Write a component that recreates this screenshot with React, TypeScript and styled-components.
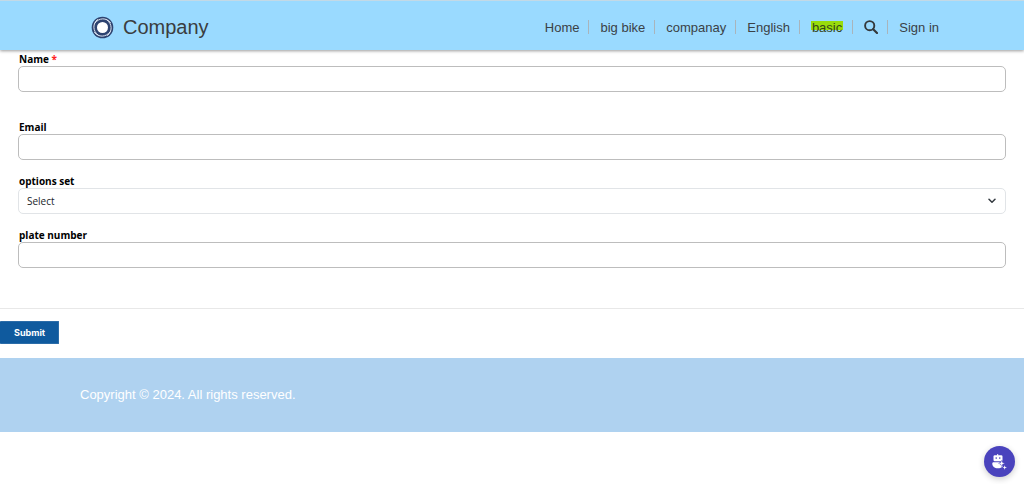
import React from "react";
import styled, { createGlobalStyle } from "styled-components";

const GlobalStyle = createGlobalStyle`
  *, *::before, *::after { box-sizing: border-box; }
  body {
    margin: 0;
    background: #fff;
    color: #000;
    font-family: "Liberation Sans", Arial, sans-serif;
    font-size: 13px;
  }
`;

const Header = styled.header`
  position: relative;
  height: 50px;
  padding: 3px 80px 0;
  display: flex;
  align-items: center;
  justify-content: space-between;
  background: #9adaff;
  border-top: 1px solid #c3d9e6;
  box-shadow: 0 1px 3px rgba(0, 0, 0, 0.4);
`;

const Brand = styled.a`
  display: flex;
  align-items: center;
  gap: 9px;
  padding-left: 11px;
  color: #3a3d40;
  font-size: 20px;
  line-height: 24px;
  text-decoration: none;
`;

const NavList = styled.ul`
  display: flex;
  align-items: center;
  margin: 0;
  padding: 0 5px 0 0;
  list-style: none;
`;

const NavItem = styled.li`
  display: flex;
  align-items: center;
  height: 24px;

  & + &::before {
    content: "";
    align-self: flex-start;
    width: 1px;
    height: 14px;
    margin: 5px 11px 0 9px;
    background: #a9b4bb;
  }
`;

const NavLink = styled.a`
  padding-top: 2px;
  color: #3a4146;
  line-height: 24px;
  text-decoration: none;
  white-space: nowrap;
`;

const Marked = styled(NavLink)`
  padding: 2px 1px 0;
  color: #34451a;
  background: linear-gradient(#98dc0c, #98dc0c) 0 7px / 100% 9px no-repeat;
`;

const IconButton = styled.button`
  display: flex;
  padding: 0;
  border: 0;
  background: none;
  color: #34383b;
  cursor: pointer;
`;

const Form = styled.form`
  margin: 0;
`;

const Fields = styled.div`
  display: flex;
  flex-direction: column;
  gap: 14px;
  padding: 2px 18px 40px;
`;

const Field = styled.div<{ $spaced?: boolean }>`
  display: flex;
  flex-direction: column;
  margin-bottom: ${(p) => (p.$spaced ? "14px" : "0")};
`;

const Label = styled.label`
  padding-left: 1px;
  font: 700 10px/14px "Open Sans", "Noto Sans", sans-serif;
`;

const Required = styled.span`
  color: #f22;
`;

const Input = styled.input`
  width: 100%;
  height: 26px;
  padding: 0 8px;
  border: 1px solid #bdbdbd;
  border-radius: 5px;
  background: #fff;
  font: 400 10px/14px "Open Sans", "Noto Sans", sans-serif;
`;

const SelectWrap = styled.div`
  display: grid;
  align-items: center;

  & > * { grid-area: 1 / 1; }
  & > svg { justify-self: end; margin-right: 10px; pointer-events: none; }
`;

const Select = styled.select`
  appearance: none;
  width: 100%;
  height: 26px;
  padding: 0 8px;
  border: 1px solid #e1e4e7;
  border-radius: 5px;
  background: #fff;
  color: #212529;
  font: 400 10px/14px "Open Sans", "Noto Sans", sans-serif;
`;

const Actions = styled.div`
  padding: 12px 0 14px;
  border-top: 1px solid #e8e8e8;
`;

const SubmitButton = styled.button`
  display: block;
  height: 23px;
  padding: 0 13px 0 14px;
  border: 1px solid #2b6ca8;
  border-left: 0;
  border-radius: 1px;
  background: #0f5a9e;
  color: #fff;
  font: 700 9px/12px Inter, sans-serif;
  cursor: pointer;
`;

const Footer = styled.footer`
  padding: 29px 80px;
  background: #afd2f0;
  color: #fff;
  line-height: 16px;
`;

const ChatButton = styled.button`
  position: fixed;
  right: 9px;
  bottom: 7px;
  width: 31px;
  height: 31px;
  display: flex;
  align-items: center;
  justify-content: center;
  padding: 0;
  border: 0;
  border-radius: 50%;
  background: #4a43bd;
  box-shadow: 0 2px 6px rgba(0, 0, 0, 0.2);
  cursor: pointer;
`;

const Logo = () => (
  <svg width="23" height="23" viewBox="0 0 23 23" fill="none" aria-hidden="true">
    <circle cx="11.5" cy="11.5" r="10.8" fill="#2e4370" />
    <g stroke="#dfe6f2" strokeWidth="1" strokeLinecap="round">
      <path d="M7 19C1.500 15 1.500 7.500 6.500 3.500" />
      <path d="M4 7C8 1.500 15.500 1.500 19.500 6.500" />
      <path d="M16 4C21.500 8 21.500 15.500 16.500 19.500" />
      <path d="M19 16C15 21.500 7.500 21.500 3.500 16.500" />
    </g>
    <circle cx="11.5" cy="11.5" r="5.5" fill="#fff" />
  </svg>
);

const SearchIcon = () => (
  <svg width="14" height="14" viewBox="0 0 14 14" fill="none" stroke="currentColor" aria-hidden="true">
    <circle cx="5.7" cy="5.7" r="4.6" strokeWidth="1.9" />
    <path d="M9.200 9.200L13 13" strokeWidth="2.2" strokeLinecap="round" />
  </svg>
);

const Chevron = () => (
  <svg width="8" height="6" viewBox="0 0 8 6" fill="none" aria-hidden="true">
    <path d="M1 1.200L4 4.200L7 1.200" stroke="#343a40" strokeWidth="1.5" strokeLinecap="round" strokeLinejoin="round" />
  </svg>
);

const BotIcon = () => (
  <svg width="15" height="16" viewBox="0 0 15 16" fill="#fff" aria-hidden="true">
    <rect x="5.2" y="0" width="1" height="2" />
    <rect x="1.5" y="1.3" width="9" height="6" rx="1.3" />
    <circle cx="4.2" cy="4.1" r="0.8" fill="#4a43bd" />
    <circle cx="7.8" cy="4.1" r="0.8" fill="#4a43bd" />
    <path d="M1.500 8.300H7.500L8.800 11L11 12C10 13.500 8 14.300 5.800 14.300C2.500 14.300 0.300 12.500 0.300 9.800C0.300 8.800 0.700 8.300 1.500 8.300Z" />
    <path d="M9.700 6.200L10.600 8.500L12.900 9.400L10.600 10.300L9.700 12.600L8.800 10.300L6.500 9.400L8.800 8.500Z" stroke="#4a43bd" strokeWidth="0.4" />
    <path d="M12.700 11.200L13.300 12.900L15 13.500L13.300 14.100L12.700 15.800L12.100 14.100L10.400 13.500L12.100 12.900Z" />
  </svg>
);

export default function App() {
  return (
    <>
      <GlobalStyle />
      <Header>
        <Brand href="#">
          <Logo />
          Company
        </Brand>
        <nav>
          <NavList>
            <NavItem><NavLink href="#">Home</NavLink></NavItem>
            <NavItem><NavLink href="#">big bike</NavLink></NavItem>
            <NavItem><NavLink href="#">companay</NavLink></NavItem>
            <NavItem><NavLink href="#">English</NavLink></NavItem>
            <NavItem><Marked href="#">basic</Marked></NavItem>
            <NavItem>
              <IconButton type="button" aria-label="Search"><SearchIcon /></IconButton>
            </NavItem>
            <NavItem><NavLink href="#">Sign in</NavLink></NavItem>
          </NavList>
        </nav>
      </Header>
      <main>
        <Form onSubmit={(e) => e.preventDefault()}>
          <Fields>
            <Field $spaced>
              <Label htmlFor="name">Name <Required>*</Required></Label>
              <Input id="name" type="text" required />
            </Field>
            <Field>
              <Label htmlFor="email">Email</Label>
              <Input id="email" type="email" />
            </Field>
            <Field>
              <Label htmlFor="options">options set</Label>
              <SelectWrap>
                <Select id="options" defaultValue="">
                  <option value="">Select</option>
                </Select>
                <Chevron />
              </SelectWrap>
            </Field>
            <Field>
              <Label htmlFor="plate">plate number</Label>
              <Input id="plate" type="text" />
            </Field>
          </Fields>
          <Actions>
            <SubmitButton type="submit">Submit</SubmitButton>
          </Actions>
        </Form>
      </main>
      <Footer>Copyright © 2024. All rights reserved.</Footer>
      <ChatButton type="button" aria-label="Open chat"><BotIcon /></ChatButton>
    </>
  );
}
